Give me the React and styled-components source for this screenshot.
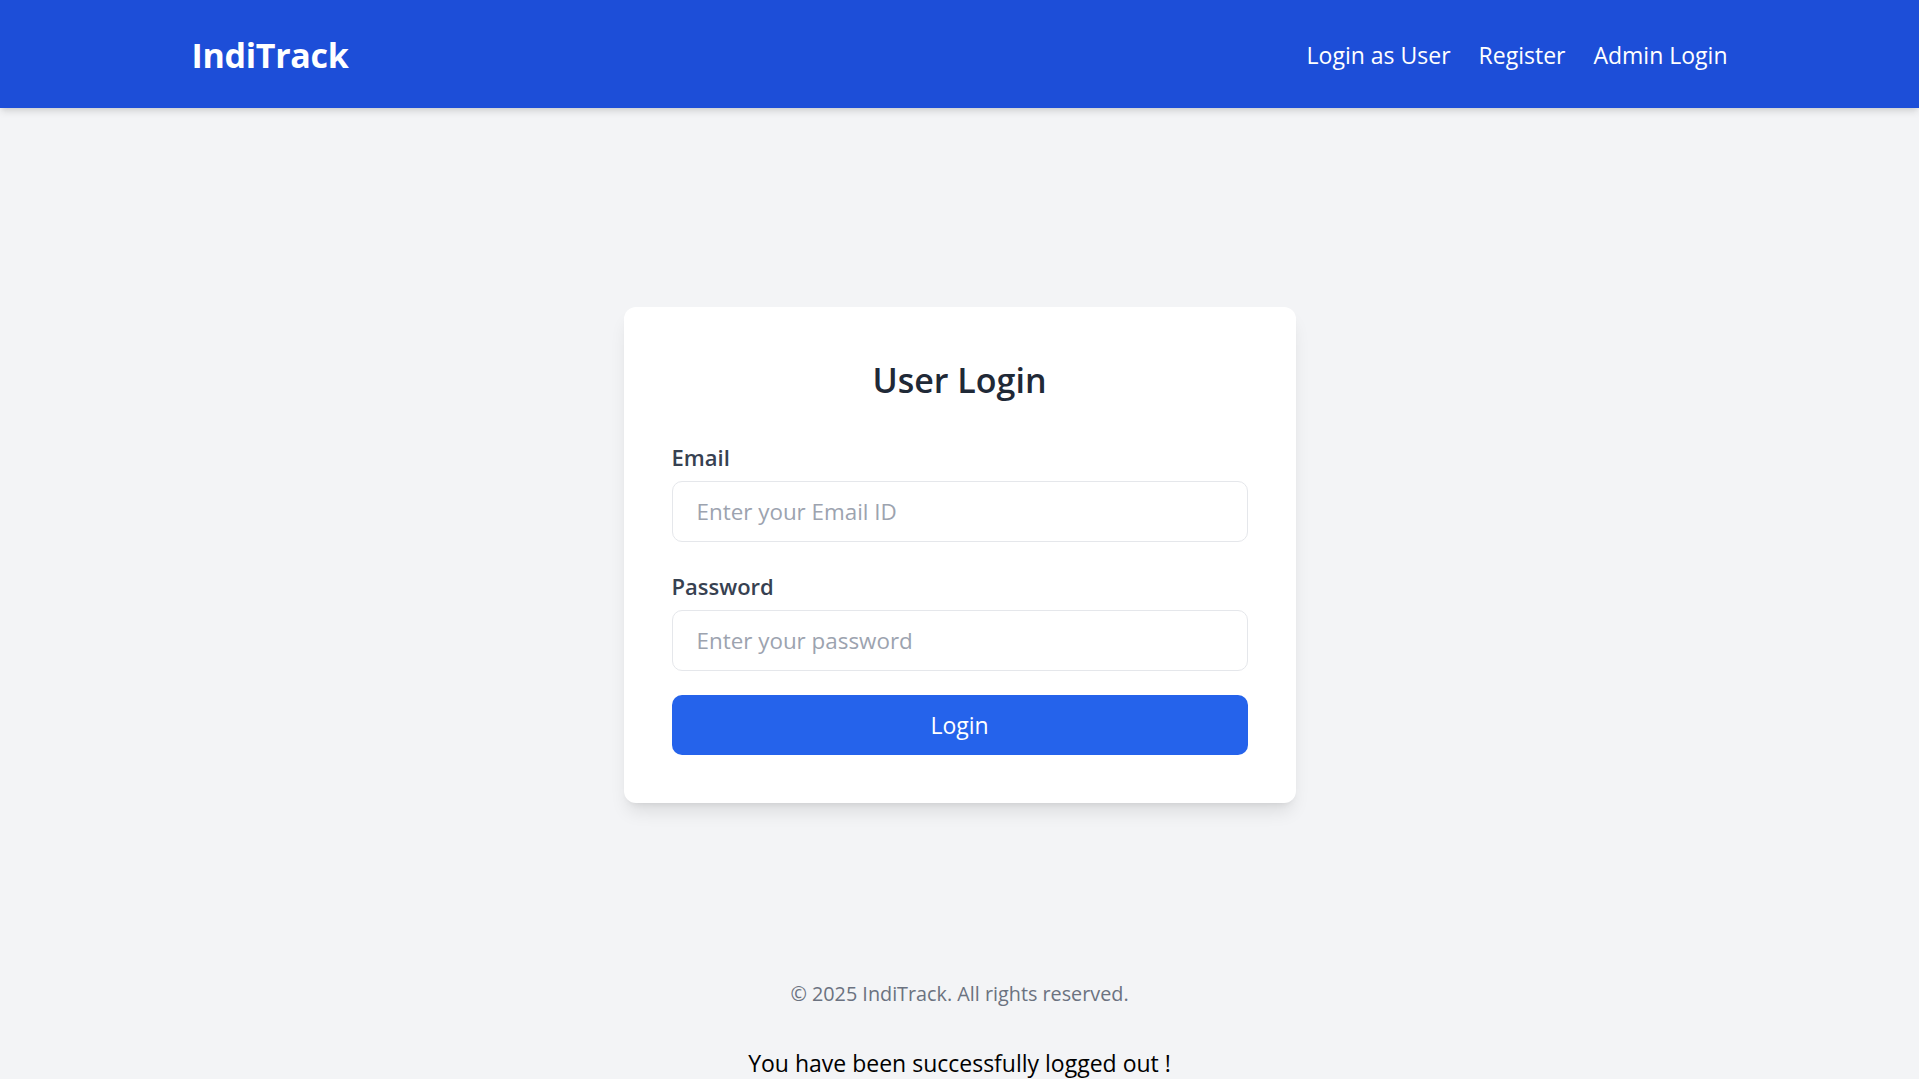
import styled, { createGlobalStyle } from 'styled-components'

const GlobalStyle = createGlobalStyle`
    body {
        margin: 0;
        background-color: #f3f4f6;
        font-family: "Segoe UI", "Open Sans", "Noto Sans", sans-serif;
    }
    * {
        box-sizing: border-box;
    }
`;

const Header = styled.header`
    position: relative;
    z-index: 1;
    height: 108px;
    background-color: #1d4ed8;
    box-shadow: 0 5px 7px -1px rgba(0,0,0,0.1), 0 2px 5px -2px rgba(0,0,0,0.1);
`;

const HeaderInner = styled.div`
    max-width: 1536px;
    height: 100%;
    margin: 0 auto;
    display: flex;
    align-items: center;
    justify-content: space-between;
`;

const Logo = styled.a`
    color: #fff;
    font-size: 34px;
    font-weight: 700;
    text-decoration: none;
    letter-spacing: -0.3px;
    margin-top: 2px;
`;

const Nav = styled.nav`
    display: flex;
    align-items: center;
    gap: 28px;
    margin-top: 2px;
`;

const NavLink = styled.a`
    color: #fff;
    font-size: 23px;
    text-decoration: none;
    cursor: pointer;
`;

const Main = styled.main`
    display: flex;
    justify-content: center;
    padding: 199px 0 153px;
`;

const Card = styled.div`
    width: 672px;
    padding: 48px;
    background-color: #fff;
    border-radius: 12px;
    box-shadow: 0 12px 18px -4px rgba(0,0,0,0.1), 0 5px 7px -5px rgba(0,0,0,0.1);
`;

const Title = styled.h2`
    margin: 1px 0 38px;
    text-align: center;
    font-size: 34px;
    line-height: 48px;
    font-weight: 600;
    color: #1f2937;
`;

const Form = styled.form`
    display: flex;
    flex-direction: column;
`;

const FormGroup = styled.div`
    display: flex;
    flex-direction: column;
    margin-bottom: ${props => props.last ? '24.5px' : '28.5px'};
`;

const Label = styled.label`
    margin-bottom: 9px;
    font-size: 22px;
    line-height: 30px;
    font-weight: 600;
    color: #374151;
`;

const Input = styled.input`
    height: 61px;
    padding: 0 24px;
    border: 1px solid #e5e7eb;
    border-radius: 10px;
    outline: none;
    font-family: inherit;
    font-size: 22.4px;
    color: #111827;

    &::placeholder {
        color: #9ca3af;
    }
`;

const Button = styled.button`
    width: 100%;
    height: 59.5px;
    border: none;
    border-radius: 10px;
    background-color: #2563eb;
    color: #fff;
    font-family: inherit;
    font-size: 23px;
    cursor: pointer;
`;

const Footer = styled.footer`
    padding: 24px 0;
    text-align: center;
    font-size: 19.8px;
    line-height: 28px;
    color: #6b7280;
`;

const Message = styled.p`
    margin: 15px 0 0;
    text-align: center;
    font-size: 23px;
    line-height: 32px;
    color: #000;
`;

const App = () => {

    const handleSubmit = (e) => {
        e.preventDefault();
    }

  return (
    <>
    <GlobalStyle />
    <Header>
        <HeaderInner>
            <Logo>IndiTrack</Logo>
            <Nav>
                <NavLink>Login as User</NavLink>
                <NavLink>Register</NavLink>
                <NavLink>Admin Login</NavLink>
            </Nav>
        </HeaderInner>
    </Header>
    <Main>
        <Card>
            <Title>User Login</Title>
            <Form onSubmit={handleSubmit}>
                <FormGroup>
                    <Label htmlFor="email">Email</Label>
                    <Input id="email" type="email" placeholder="Enter your Email ID" />
                </FormGroup>
                <FormGroup last>
                    <Label htmlFor="password">Password</Label>
                    <Input id="password" type="password" placeholder="Enter your password" />
                </FormGroup>
                <Button type="submit">Login</Button>
            </Form>
        </Card>
    </Main>
    <Footer>© 2025 IndiTrack. All rights reserved.</Footer>
    <Message>You have been successfully logged out !</Message>
    </>
  )
}

export default App
